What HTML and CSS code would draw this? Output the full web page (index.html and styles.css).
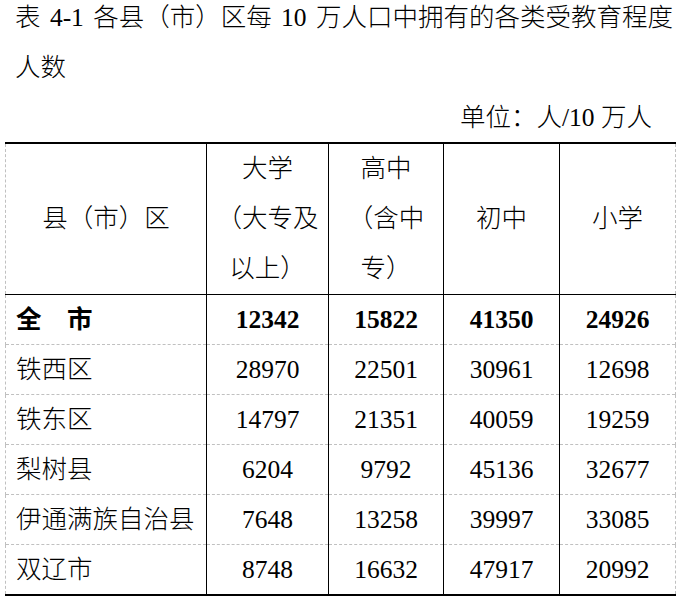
FILE: index.html
```html
<!DOCTYPE html>
<html lang="zh-CN">
<head>
<meta charset="utf-8">
<title>表 4-1</title>
<link rel="stylesheet" href="styles.css">
</head>
<body>
<div class="page">
  <p class="caption">表 4-1 各县（市）区每 10 万人口中拥有的各类受教育程度人数</p>
  <p class="unit">单位：人/10 万人</p>
  <table class="edu">
    <colgroup>
      <col class="c-name">
      <col class="c-uni">
      <col class="c-high">
      <col class="c-mid">
      <col class="c-pri">
    </colgroup>
    <thead>
      <tr>
        <th>县（市）区</th>
        <th>大学<br>（大专及以上）</th>
        <th>高中<br>（含中专）</th>
        <th>初中</th>
        <th>小学</th>
      </tr>
    </thead>
    <tbody>
      <tr class="total">
        <td class="name">全　市</td>
        <td>12342</td>
        <td>15822</td>
        <td>41350</td>
        <td>24926</td>
      </tr>
      <tr>
        <td class="name">铁西区</td>
        <td>28970</td>
        <td>22501</td>
        <td>30961</td>
        <td>12698</td>
      </tr>
      <tr>
        <td class="name">铁东区</td>
        <td>14797</td>
        <td>21351</td>
        <td>40059</td>
        <td>19259</td>
      </tr>
      <tr>
        <td class="name">梨树县</td>
        <td>6204</td>
        <td>9792</td>
        <td>45136</td>
        <td>32677</td>
      </tr>
      <tr>
        <td class="name">伊通满族自治县</td>
        <td>7648</td>
        <td>13258</td>
        <td>39997</td>
        <td>33085</td>
      </tr>
      <tr>
        <td class="name">双辽市</td>
        <td>8748</td>
        <td>16632</td>
        <td>47917</td>
        <td>20992</td>
      </tr>
    </tbody>
  </table>
</div>
</body>
</html>
```
FILE: styles.css
```css
html, body {
  margin: 0;
  padding: 0;
  background: #ffffff;
}

body {
  font-family: "Liberation Serif", "Noto Sans CJK SC", serif;
  font-size: 25.5px;
  font-weight: 300;
  color: #000000;
}

.page {
  width: 682px;
}

.caption {
  margin: -7px 0 0 0;
  padding: 0 0 0 15px;
  line-height: 50px;
  word-spacing: 3px;
}

.unit {
  margin: 0;
  padding-right: 30px;
  line-height: 50px;
  text-align: right;
}

.edu {
  margin: -1px 0 0 5px;
  border-collapse: collapse;
  table-layout: fixed;
  width: 671px;
  border-top: 2px solid #000;
  border-bottom: 2px solid #000;
  border-left: 1px dashed #c0c0c0;
  border-right: 1px dashed #c0c0c0;
}

.c-name { width: 201px; }
.c-uni { width: 122px; }
.c-high { width: 115px; }
.c-mid { width: 116px; }
.c-pri { width: 116px; }

.edu th,
.edu td {
  padding: 0 5px;
  text-align: center;
  vertical-align: middle;
  border-left: 1px solid #000;
  border-right: 1px solid #000;
}

.edu th:first-child,
.edu td:first-child {
  border-left: 1px dashed #c0c0c0;
}

.edu th:last-child,
.edu td:last-child {
  border-right: 1px dashed #c0c0c0;
}

.edu th {
  font-weight: 300;
  height: 150px;
  line-height: 50px;
  border-bottom: 1px solid #000;
}

.edu td {
  height: 49px;
  line-height: 30px;
  border-top: 1px dashed #c0c0c0;
}

.edu tbody tr:first-child td {
  border-top: 1px solid #000;
}

.edu td.name {
  text-align: left;
  padding-left: 10px;
}

.edu tr.total td {
  font-weight: bold;
}
```
